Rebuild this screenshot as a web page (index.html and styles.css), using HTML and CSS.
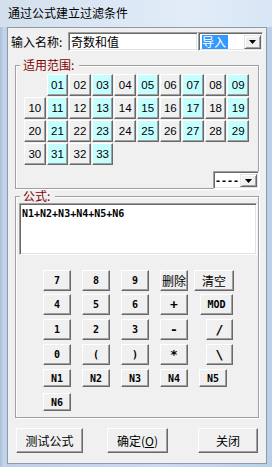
FILE: index.html
```html
<!DOCTYPE html>
<html>
<head>
<meta charset="utf-8">
<title>通过公式建立过滤条件</title>
<link rel="stylesheet" href="styles.css">
</head>
<body>
<div class="window">
  <div class="titlebar">通过公式建立过滤条件</div>
  <div class="client">
    <div class="name-row">
      <span class="name-label">输入名称:</span>
      <div class="textbox">奇数和值</div>
      <div class="combo import">
        <span class="sel">导入</span>
        <span class="dd-btn"><svg width="7" height="4" viewBox="0 0 7 4"><polygon points="0,0 7,0 3.5,4" fill="#000"/></svg></span>
      </div>
    </div>

    <div class="group range">
      <div class="legend">适用范围:</div>
      <div class="numgrid">
        <div class="num odd first">01</div><div class="num">02</div><div class="num odd">03</div><div class="num">04</div><div class="num odd">05</div><div class="num">06</div><div class="num odd">07</div><div class="num">08</div><div class="num odd">09</div>
        <div class="num">10</div><div class="num odd">11</div><div class="num">12</div><div class="num odd">13</div><div class="num">14</div><div class="num odd">15</div><div class="num">16</div><div class="num odd">17</div><div class="num">18</div><div class="num odd">19</div>
        <div class="num">20</div><div class="num odd">21</div><div class="num">22</div><div class="num odd">23</div><div class="num">24</div><div class="num odd">25</div><div class="num">26</div><div class="num odd">27</div><div class="num">28</div><div class="num odd">29</div>
        <div class="num">30</div><div class="num odd">31</div><div class="num">32</div><div class="num odd">33</div>
      </div>
      <div class="combo-row">
        <div class="combo dash">
          <span class="dash-text">----</span>
          <span class="dd-btn"><svg width="7" height="4" viewBox="0 0 7 4"><polygon points="0,0 7,0 3.5,4" fill="#000"/></svg></span>
        </div>
      </div>
    </div>

    <div class="group formula">
      <div class="legend">公式:</div>
      <div class="formula-box">N1+N2+N3+N4+N5+N6</div>
      <div class="calc">
        <div class="calc-row r1">
          <div class="cbtn">7</div><div class="cbtn">8</div><div class="cbtn">9</div><div class="cbtn cjk">删除</div><div class="cbtn cjk wide">清空</div>
        </div>
        <div class="calc-row r2">
          <div class="cbtn">4</div><div class="cbtn">5</div><div class="cbtn">6</div><div class="cbtn op">+</div><div class="cbtn mod">MOD</div>
        </div>
        <div class="calc-row r3">
          <div class="cbtn">1</div><div class="cbtn">2</div><div class="cbtn">3</div><div class="cbtn op">-</div><div class="cbtn op slash">/</div>
        </div>
        <div class="calc-row r4">
          <div class="cbtn">0</div><div class="cbtn">(</div><div class="cbtn">)</div><div class="cbtn op">*</div><div class="cbtn op slash">\</div>
        </div>
        <div class="calc-row r5 short">
          <div class="cbtn">N1</div><div class="cbtn">N2</div><div class="cbtn">N3</div><div class="cbtn">N4</div><div class="cbtn">N5</div>
        </div>
        <div class="calc-row r6 short">
          <div class="cbtn">N6</div>
        </div>
      </div>
    </div>

    <div class="actions">
      <div class="abtn test">测试公式</div>
      <div class="abtn ok">确定(<u>O</u>)</div>
      <div class="abtn close">关闭</div>
    </div>
  </div>
</div>
</body>
</html>
```

FILE: styles.css
```css
* { box-sizing: border-box; }
html, body { margin: 0; padding: 0; }
body {
  width: 272px;
  height: 467px;
  overflow: hidden;
  font-family: "Noto Sans CJK SC", "Liberation Sans", sans-serif;
  font-size: 12px;
  color: #000;
}
.window {
  width: 272px;
  height: 467px;
  display: flex;
  flex-direction: column;
  background: linear-gradient(to right, #a9c0da 0px, #c4d6ea 4px, #bdd0e6 7px, #c9dbee 60%, #b9d0e8 100%);
}
.titlebar {
  height: 27px;
  line-height: 26px;
  padding-left: 8px;
  background: linear-gradient(to right, #d4dfec 0%, #dbe7f4 40%, #e1ecf8 70%, #d8e6f5 100%);
  white-space: nowrap;
}
.client {
  margin-left: 7px;
  width: 260px;
  height: 437px;
  background: #f0f0f0;
  border: 1px solid #8d9aab;
}

/* name row */
.name-row {
  display: flex;
  margin-top: 4px;
  padding-left: 3px;
  height: 19px;
}
.name-label {
  width: 57px;
  line-height: 19px;
  white-space: nowrap;
}
.textbox {
  width: 130px;
  height: 19px;
  background: #fff;
  border-top: 1px solid #a0a0a0;
  border-left: 1px solid #a0a0a0;
  border-bottom: 1px solid #fff;
  border-right: 1px solid #fff;
  box-shadow: inset 1px 1px 0 #696969, inset -1px -1px 0 #e3e3e3;
  padding: 1px 0 0 2px;
  line-height: 15px;
  white-space: nowrap;
}
.combo {
  display: flex;
  align-items: stretch;
  background: #fff;
  border-top: 1px solid #a0a0a0;
  border-left: 1px solid #a0a0a0;
  border-bottom: 1px solid #fff;
  border-right: 1px solid #fff;
  box-shadow: inset 1px 1px 0 #696969, inset -1px -1px 0 #e3e3e3;
  padding: 2px 1px 1px 2px;
  white-space: nowrap;
}
.combo.import {
  width: 65px;
  height: 19px;
}
.sel {
  background: #3399ff;
  color: #fff;
  width: 26px;
  margin-left: 1px;
  line-height: 14px;
  white-space: nowrap;
}
.dd-btn {
  margin-left: auto;
  flex: 0 0 17px;
  width: 17px;
  display: flex;
  align-items: center;
  justify-content: center;
  background: #f0f0f0;
  border-top: 1px solid #e3e3e3;
  border-left: 1px solid #e3e3e3;
  border-right: 1px solid #696969;
  border-bottom: 1px solid #696969;
  box-shadow: inset 1px 1px 0 #fff, inset -1px -1px 0 #a0a0a0;
}
.dd-btn svg { display: block; }

/* group boxes */
.group {
  margin: 0 7px;
  width: 244px;
  border: 1px solid #a0a0a0;
  box-shadow: inset 1px 1px 0 #fff, 1px 1px 0 #fff;
}
.group.range { margin-top: 14px; }
.group.formula { margin-top: 7px; padding-bottom: 6px; }
.legend {
  width: fit-content;
  margin: -7px 0 0 4px;
  padding: 0 5px 0 3px;
  height: 12px;
  line-height: 12px;
  background: #f0f0f0;
  color: #800000;
  white-space: nowrap;
}

/* number grid */
.numgrid {
  display: grid;
  grid-template-columns: repeat(10, 21.6px);
  grid-auto-rows: 22px;
  column-gap: 1px;
  row-gap: 1px;
  margin: 3px 0 0 8px;
}
.num {
  display: flex;
  align-items: center;
  justify-content: center;
  font-family: "Liberation Sans", sans-serif;
  font-size: 11.5px;
  background: #f0f0f0;
  border-top: 1px solid #fff;
  border-left: 1px solid #fff;
  border-right: 1px solid #696969;
  border-bottom: 1px solid #696969;
  box-shadow: inset -1px -1px 0 #a0a0a0;
}
.num.odd { background: #c4ffff; }
.num.first { grid-column-start: 2; }

.combo-row {
  display: flex;
  justify-content: flex-end;
  margin: 6px -1px -1px 0;
}
.combo.dash {
  width: 46px;
  height: 18px;
  padding: 2px 1px 1px 1px;
}
.dash-text {
  flex: 1 1 auto;
  font-family: "DejaVu Sans Mono", monospace;
  font-weight: bold;
  font-size: 10px;
  line-height: 13px;
  overflow: hidden;
}

/* formula */
.formula-box {
  margin: 1px 1px 0 3px;
  height: 52px;
  background: #fff;
  border-top: 1px solid #a0a0a0;
  border-left: 1px solid #a0a0a0;
  border-bottom: 1px solid #fff;
  border-right: 1px solid #fff;
  box-shadow: inset 1px 1px 0 #696969, inset -1px -1px 0 #e3e3e3;
  padding: 4px 0 0 2px;
  font-family: "DejaVu Sans Mono", monospace;
  font-weight: bold;
  font-size: 10px;
  line-height: 12px;
  white-space: nowrap;
}

.calc {
  margin: 15px 0 0 27px;
}
.calc-row {
  display: flex;
  column-gap: 11px;
  height: 21px;
}
.calc-row.short { height: 18px; }
.calc-row.r2 { margin-top: 3px; }
.calc-row.r3 { margin-top: 4px; }
.calc-row.r4 { margin-top: 4px; }
.calc-row.r5 { margin-top: 4px; }
.calc-row.r6 { margin-top: 6px; }

.cbtn {
  width: 28px;
  display: flex;
  align-items: center;
  justify-content: center;
  background: #f0f0f0;
  border-top: 1px solid #fff;
  border-left: 1px solid #fff;
  border-right: 1px solid #696969;
  border-bottom: 1px solid #696969;
  box-shadow: inset -1px -1px 0 #a0a0a0;
  font-family: "DejaVu Sans Mono", monospace;
  font-weight: bold;
  font-size: 10px;
  white-space: nowrap;
}
.cbtn.cjk {
  font-family: "Noto Sans CJK SC", sans-serif;
  font-weight: normal;
  font-size: 12px;
}
.cbtn.wide { width: 40px; margin-left: -5px; }
.cbtn.mod { width: 33px; margin-left: 1px; }
.cbtn.slash { width: 27px; margin-left: 7px; }
.cbtn.op { font-size: 13px; }

/* bottom actions */
.actions {
  display: flex;
  margin-top: 10px;
  padding-left: 8px;
  height: 25px;
}
.abtn {
  display: flex;
  align-items: center;
  justify-content: center;
  background: #f0f0f0;
  border-top: 1px solid #fff;
  border-left: 1px solid #fff;
  border-right: 1px solid #696969;
  border-bottom: 1px solid #696969;
  box-shadow: inset -1px -1px 0 #a0a0a0;
  white-space: nowrap;
}
.abtn.test { width: 67px; }
.abtn.ok { width: 61px; margin-left: 24px; }
.abtn.close { width: 60px; margin-left: 30px; }
.abtn u { text-decoration: underline; }
```
